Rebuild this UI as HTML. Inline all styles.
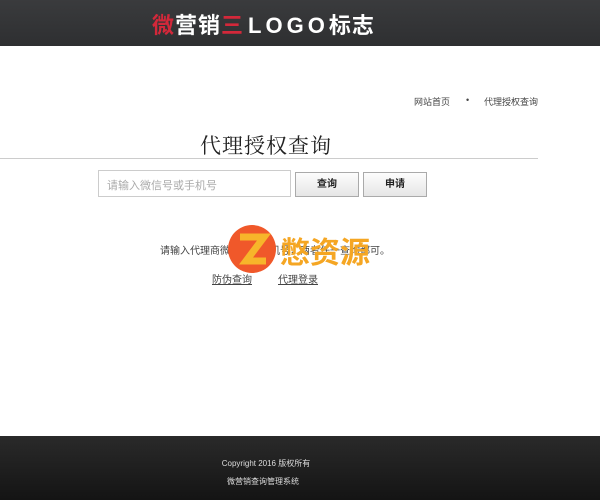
<!DOCTYPE html>
<html><head><meta charset="utf-8"><style>
*{margin:0;padding:0;box-sizing:border-box}
body{width:600px;height:500px;background:#fff;font-family:"Liberation Sans","Noto Sans CJK SC",sans-serif;position:relative;overflow:hidden;color:#333}
.hd{position:absolute;left:0;top:0;width:600px;height:46px;background:linear-gradient(#3a3b3d,#2e2f31)}
.logo{position:absolute;left:152px;top:8px;font-size:22px;font-weight:bold;color:#fff;white-space:nowrap;letter-spacing:1px}
.logo .r{color:#d3283a}
.logo .l{letter-spacing:4px;margin-left:4px}
.nav{position:absolute;top:95px;font-size:9px;color:#444}
h1{position:absolute;left:200px;top:130px;font-family:"Noto Serif CJK SC",serif;font-weight:normal;font-size:21px;color:#222;letter-spacing:1px}
.line{position:absolute;left:0;top:158px;width:538px;height:1px;background:#ccc}
.inp{position:absolute;left:98px;top:170px;width:193px;height:27px;border:1px solid #ccc;font-size:11px;color:#aaa;padding:6px 8px}
.btn{position:absolute;top:172px;width:64px;height:25px;border:1px solid #aaa;background:linear-gradient(#fdfdfd,#e6e6e6);font-size:10px;color:#222;text-align:center;line-height:23px;font-weight:bold}
.tip{position:absolute;left:160px;top:242px;font-size:10px;color:#444}
.lk{position:absolute;top:271px;font-size:10px;color:#444;text-decoration:underline}
.ft{position:absolute;left:0;top:436px;width:600px;height:64px;background:linear-gradient(#2a2a2a,#141414)}
.ft p{position:absolute;left:0;width:532px;text-align:center;font-size:8px;color:#ddd}
.wm{position:absolute;left:228px;top:223px}
</style></head><body>
<div class="hd"><div class="logo"><span class="r">微</span>营销<span class="r">三</span><span class="l">LOGO</span>标志</div></div>
<div class="nav" style="left:414px">网站首页</div>
<div class="nav" style="left:466px">•</div>
<div class="nav" style="left:484px">代理授权查询</div>
<h1>代理授权查询</h1>
<div class="line"></div>
<div class="inp">请输入微信号或手机号</div>
<div class="btn" style="left:295px">查询</div>
<div class="btn" style="left:363px">申请</div>
<div class="tip">请输入代理商微信号或手机号，两者任一查询都可。</div>
<div class="lk" style="left:212px">防伪查询</div>
<div class="lk" style="left:278px">代理登录</div>
<div class="wm">
<svg width="150" height="52"><circle cx="24" cy="26" r="24" fill="#f0582a"/><path d="M12 14h24l-18 24h20" stroke="#f7b52a" stroke-width="7" fill="none"/><text x="52" y="40" font-size="30" font-weight="bold" fill="#f5a623" font-family="Noto Sans CJK SC,sans-serif">憋资源</text></svg>
</div>
<div class="ft">
<p style="top:22px;font-family:'Liberation Sans','Noto Sans CJK SC',sans-serif">Copyright 2016 版权所有</p>
<p style="top:40px;width:526px">微营销查询管理系统</p>
</div>
</body></html>
